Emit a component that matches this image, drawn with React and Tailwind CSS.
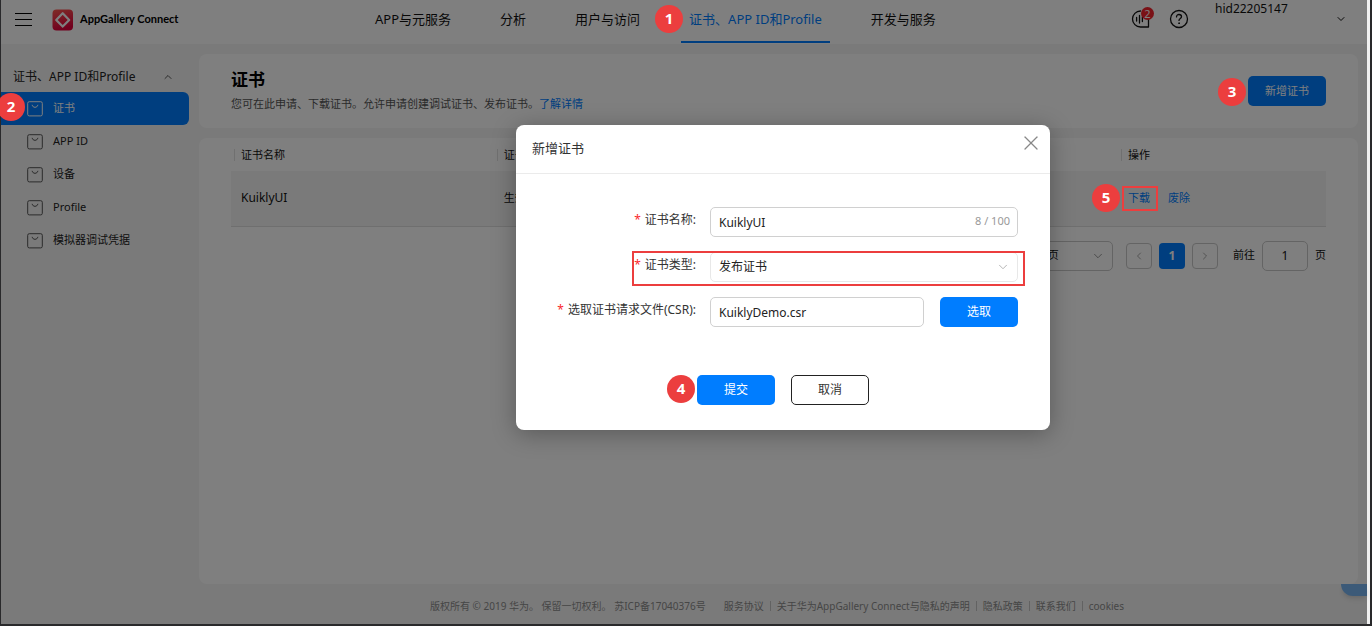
import React from "react";
import { ChevronDown, ChevronLeft, ChevronRight, ChevronUp, X } from "lucide-react";

const navItems = [
  { label: "APP与元服务" },
  { label: "分析" },
  { label: "用户与访问" },
  { label: "证书、APP ID和Profile", active: true, step: 1 },
  { label: "开发与服务" },
];

const menuItems = [
  { label: "证书", active: true, step: 2 },
  { label: "APP ID" },
  { label: "设备" },
  { label: "Profile" },
  { label: "模拟器调试凭据" },
];

const footerLinks = ["服务协议", "关于华为AppGallery Connect与隐私的声明", "隐私政策", "联系我们", "cookies"];

function Step({ n, className }) {
  return (
    <span
      className={`absolute z-20 flex size-7 items-center justify-center rounded-full bg-[#ec3e3e] pb-0.5 font-['Open_Sans',sans-serif] text-[15px] font-bold text-white ${className}`}
    >
      {n}
    </span>
  );
}

function Logo() {
  return (
    <svg viewBox="0 0 22 22" className="size-[22px]" aria-hidden="true">
      <defs>
        <linearGradient id="logo" x1="0" y1="0" x2="0.3" y2="1">
          <stop offset="0" stopColor="#ff5a50" />
          <stop offset="1" stopColor="#e3003c" />
        </linearGradient>
      </defs>
      <rect x="0.5" y="0.5" width="20.5" height="21" rx="4" fill="url(#logo)" />
      <path d="M10.7 4.2 17.2 10.9 10.7 17.6 4.2 10.9Z" fill="none" stroke="#fff" strokeWidth="2.2" strokeLinejoin="round" />
    </svg>
  );
}

function MenuIcon({ className }) {
  return (
    <svg viewBox="0 0 16 16" className={`size-4 shrink-0 ${className}`} fill="none" stroke="currentColor" aria-hidden="true">
      <rect x="0.7" y="0.7" width="14.6" height="14.2" rx="1.6" />
      <path d="M5.2 4.200c.3 1.300 1.400 2.100 2.800 2.100s2.500-.8 2.800-2.100" strokeLinecap="round" />
    </svg>
  );
}

function TopBar() {
  return (
    <header className="flex h-11 items-center bg-white">
      <div className="flex w-[366px] shrink-0 items-center pb-[5px] pl-3.5">
        <button aria-label="菜单" className="flex h-[13px] w-[17px] flex-col justify-between">
          <span className="h-px w-full bg-black" />
          <span className="h-px w-full bg-black" />
          <span className="h-px w-full bg-black" />
        </button>
        <a href="#home" className="ml-5 flex items-center gap-1.5 text-black">
          <Logo />
          <span className="font-['Lato',sans-serif] text-[11px] font-bold">AppGallery Connect</span>
        </a>
      </div>
      <nav className="flex h-full gap-[33px] text-[13px] whitespace-nowrap">
        {navItems.map((item) => (
          <a
            key={item.label}
            href="#nav"
            className={`relative flex h-[43px] items-center border-b-2 px-2 pb-0.5 ${
              item.active ? "border-[#007dff] text-[#007dff]" : "border-transparent text-[#111]"
            }`}
          >
            {item.step && <Step n={item.step} className="top-[5px] -left-[26px]" />}
            {item.label}
          </a>
        ))}
      </nav>
      <div className="ml-auto flex h-full pt-2 pr-5 text-[#111]">
        <button aria-label="消息" className="relative h-[22px] w-5">
          <svg viewBox="0 0 20 22" className="h-[22px] w-5" fill="none" stroke="currentColor" strokeWidth="1.300" strokeLinecap="round" aria-hidden="true">
            <path d="M9.500 3A8 8 0 0 0 9.500 19H17.500V11" strokeLinejoin="round" />
            <path d="M5.600 9.500v3.500M8.500 7.500v7.500M11.400 9v4.500" />
          </svg>
          <span className="absolute -top-px left-2.5 flex size-[13px] items-center justify-center rounded-full bg-[#f5222d] text-[11px] leading-none text-white">
            2
          </span>
        </button>
        <button aria-label="帮助" className="ml-[18px] h-[22px] w-5">
          <svg viewBox="0 0 20 22" className="h-[22px] w-5" fill="none" stroke="currentColor" strokeWidth="1.300" strokeLinecap="round" aria-hidden="true">
            <circle cx="10" cy="11" r="8.500" />
            <path d="M7.500 8.900c0-1.500 1.100-2.400 2.500-2.400s2.500.9 2.500 2.200c0 1.700-2.500 1.900-2.500 3.700" />
            <circle cx="10" cy="15.200" r=".5" fill="currentColor" strokeWidth=".8" />
          </svg>
        </button>
        <button className="ml-[26px] flex w-[132px] items-start justify-between text-left text-[12px]">
          <span className="-mt-[7px] leading-4">hid22205147</span>
          <ChevronDown className="mt-[5px] size-3" strokeWidth={2} />
        </button>
      </div>
    </header>
  );
}

function Sidebar() {
  return (
    <aside className="w-[198px] shrink-0 pt-[17px] text-[#222]">
      <button className="flex h-[31px] w-full items-center justify-between pr-[25px] pl-3 text-[12px]">
        证书、APP ID和Profile
        <ChevronUp className="size-3" strokeWidth={1.500} />
      </button>
      <ul className="pr-2.5 text-[11px]">
        {menuItems.map((item) => (
          <li key={item.label} className="relative">
            {item.step && <Step n={item.step} className="top-px -left-1" />}
            <a
              href="#menu"
              className={`flex h-[33px] items-center gap-2.5 rounded-r-md pl-[26px] ${
                item.active ? "bg-[#007dff] text-white" : ""
              }`}
            >
              <MenuIcon className={item.active ? "text-white" : "text-[#555]"} />
              {item.label}
            </a>
          </li>
        ))}
      </ul>
    </aside>
  );
}

function Th({ children, className = "" }) {
  return (
    <th className={`p-0 text-left font-normal ${className}`}>
      <span className="ml-[3px] flex h-3 items-center border-l border-[#e0e0e0] pl-1.5">{children}</span>
    </th>
  );
}

function CertificateTable() {
  return (
    <table className="mt-px w-full table-fixed text-[11px] whitespace-nowrap text-[#111]">
      <thead>
        <tr className="h-8">
          <Th className="w-[24%]">证书名称</Th>
          <Th>证书</Th>
          <Th className="w-[19%]">操作</Th>
        </tr>
      </thead>
      <tbody>
        <tr className="h-[55px] border-b border-[#dedede] bg-[#f5f5f5]">
          <td className="p-0 pl-2.5 text-[12px]">KuiklyUI</td>
          <td className="p-0 pl-2.5">生效</td>
          <td className="p-0 pl-2.5">
            <span className="flex gap-[18px]">
              <a href="#download" className="relative text-[#007dff]">
                <Step n={5} className="top-[-6px] left-[-36px]" />
                <span className="absolute -inset-y-1 -right-2 -left-1.5 z-20 border-2 border-[#ec3e3e]" />
                下载
              </a>
              <a href="#revoke" className="text-[#007dff]">废除</a>
            </span>
          </td>
        </tr>
      </tbody>
    </table>
  );
}

function Pagination() {
  return (
    <div className="mt-3.5 flex items-center justify-end gap-[7px] text-[11px] text-[#111]">
      <div className="relative mr-1.5">
        <select aria-label="每页条数" className="h-[30px] w-[106px] appearance-none rounded-[5px] border border-[#c8c8c8] bg-white pl-3">
          <option>10条/页</option>
        </select>
        <ChevronDown className="pointer-events-none absolute top-2 right-2 size-3.5 text-[#777]" strokeWidth={1.300} />
      </div>
      <button aria-label="上一页" className="flex size-[26px] items-center justify-center rounded border border-[#c8c8c8] text-[#888]">
        <ChevronLeft className="size-3" strokeWidth={1.500} />
      </button>
      <button className="size-[26px] rounded bg-[#007dff] text-[12px] font-bold text-white">1</button>
      <button aria-label="下一页" className="flex size-[26px] items-center justify-center rounded border border-[#c8c8c8] text-[#888]">
        <ChevronRight className="size-3" strokeWidth={1.500} />
      </button>
      <label htmlFor="page" className="ml-2">前往</label>
      <input id="page" defaultValue="1" className="h-[30px] w-[46px] rounded-[5px] border border-[#c8c8c8] text-center text-[12px]" />
      <span>页</span>
    </div>
  );
}

function Footer() {
  return (
    <footer className="flex h-10 items-center justify-center pt-1 pl-[192px] text-[10px] whitespace-nowrap text-[#8c8c8c]">
      <span className="mr-3">版权所有 © 2019 华为。 保留一切权利。 苏ICP备17040376号</span>
      {footerLinks.map((text, i) => (
        <React.Fragment key={text}>
          {i > 0 && <span className="h-2.5 w-px bg-[#c4c4c4]" />}
          <a href="#footer" className="px-1.5">{text}</a>
        </React.Fragment>
      ))}
    </footer>
  );
}

function FormRow({ id, label, children }) {
  return (
    <div className="relative flex h-[30px] items-center">
      <label htmlFor={id} className="w-[180px] shrink-0 pb-1 text-right text-[12px] text-[#333]">
        <span className="mr-1 text-[#fa2a2d]">*</span>
        {label}:
      </label>
      <div className="ml-3.5 flex flex-1 gap-4">{children}</div>
    </div>
  );
}

function Dialog() {
  const field = "h-[30px] w-full min-w-0 rounded-[5px] border border-[#d0d0d0] bg-white px-2 text-[12px] text-[#222]";
  const button = "h-[30px] w-[78px] shrink-0 rounded-[5px] text-[12px]";
  return (
    <div role="dialog" aria-labelledby="dialog-title" className="w-[534px] rounded-lg bg-white shadow-[0_4px_24px_rgba(0,0,0,0.3)]">
      <div className="flex h-[49px] items-center justify-between border-b border-[#ebebeb] pr-[7px] pl-4">
        <h2 id="dialog-title" className="text-[13px] text-[#333]">新增证书</h2>
        <button aria-label="关闭" className="-mt-3 text-[#888]">
          <X className="size-6" strokeWidth={1.300} />
        </button>
      </div>
      <form className="pt-[33px] pb-[25px]" onSubmit={(e) => e.preventDefault()}>
        <div className="flex flex-col gap-[15px] pr-8">
          <FormRow id="cert-name" label="证书名称">
            <div className="relative flex-1">
              <input id="cert-name" defaultValue="KuiklyUI" className={field} />
              <span className="absolute top-1.5 right-2 text-[11px] text-[#999]">8 / 100</span>
            </div>
          </FormRow>
          <FormRow id="cert-type" label="证书类型">
            <span className="pointer-events-none absolute top-[-1px] right-[-7px] left-[116px] z-10 h-[35px] border-2 border-[#ec3e3e]" />
            <div className="relative flex-1">
              <select id="cert-type" className="h-[30px] w-full appearance-none rounded-[5px] border border-[#e8e8e8] bg-white px-2 text-[12px] text-[#222]">
                <option>发布证书</option>
              </select>
              <ChevronDown className="pointer-events-none absolute top-2 right-2 size-3.5 text-[#aaa]" strokeWidth={1.500} />
            </div>
          </FormRow>
          <FormRow id="csr" label="选取证书请求文件(CSR)">
            <input id="csr" defaultValue="KuiklyDemo.csr" className={field} />
            <button type="button" className={`${button} bg-[#007dff] text-white`}>选取</button>
          </FormRow>
        </div>
        <div className="mt-12 flex justify-center gap-4">
          <button type="submit" className={`relative ${button} bg-[#007dff] text-white`}>
            <Step n={4} className="top-0 -left-[30px]" />
            提交
          </button>
          <button type="button" className={`${button} border border-[#222] bg-white text-[#333]`}>取消</button>
        </div>
      </form>
    </div>
  );
}

export default function App() {
  return (
    <div className="flex min-h-screen overflow-hidden bg-[#29292b] pr-0.5 pb-0.5 pl-px font-['Noto_Sans','Noto_Sans_CJK_SC',sans-serif]">
      <div className="relative flex flex-1 flex-col bg-[#f5f5f5]">
        <TopBar />
        <div className="flex flex-1">
          <Sidebar />
          <main className="flex flex-1 flex-col gap-2.5 pt-2.5 pr-[9px]">
            <section className="flex h-[74px] items-center justify-between rounded-lg bg-white px-8">
              <div>
                <h1 className="text-[17px] leading-6 font-bold text-black">证书</h1>
                <p className="mt-0.5 text-[11px] leading-5 text-[#555]">
                  您可在此申请、下载证书。允许申请创建调试证书、发布证书。
                  <a href="#more" className="text-[#007dff]">了解详情</a>
                </p>
              </div>
              <button className="relative h-[30px] w-[78px] rounded-[5px] bg-[#007dff] text-[11px] text-white">
                <Step n={3} className="top-0.5 -left-[30px]" />
                新增证书
              </button>
            </section>
            <section className="flex-1 rounded-lg bg-white px-8">
              <CertificateTable />
              <Pagination />
            </section>
          </main>
        </div>
        <div className="relative">
          <span className="absolute top-0 right-0 h-3 w-[26px] rounded-bl-[16px] bg-[#78b4f0] shadow-md" />
          <Footer />
        </div>
        <div className="absolute inset-0 z-10 flex items-start justify-center bg-black/50 pt-[125px] pl-[198px]">
          <Dialog />
        </div>
      </div>
      <div className="w-[3px] bg-[#f0f0f0]" />
    </div>
  );
}
